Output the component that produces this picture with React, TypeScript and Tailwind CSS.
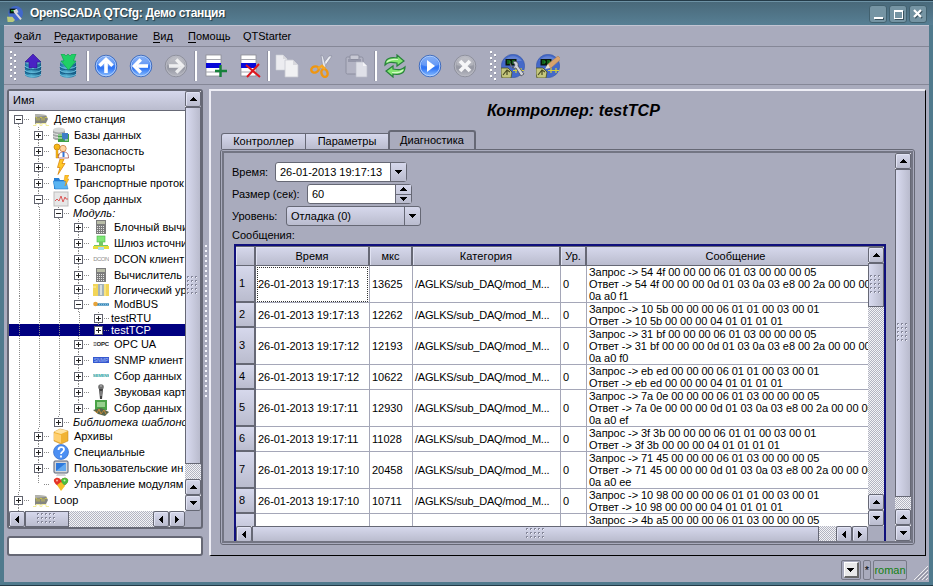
import type { ReactNode } from "react";

const frame = "border-2 border-[#666875] rounded-[3px]";
const metal = "bg-gradient-to-b from-[#d6d8ec] to-[#babcce]";
const checker =
  "bg-[conic-gradient(#f4f4f6_25%,#b2b4c2_0_50%,#f4f4f6_0_75%,#b2b4c2_0)] bg-[length:2px_2px]";

type Dir = "up" | "down" | "left" | "right";
const arrows: Record<Dir, string> = {
  up: "M3 0h1v1h1v1h1v1h1v1H0V3h1V2h1V1h1z",
  down: "M0 0h7v1H6v1H5v1H4v1H3V3H2V2H1V1H0z",
  left: "M4 0v7H3V6H2V5H1V4H0V3h1V2h1V1h1V0z",
  right: "M0 0v7h1V6h1V5h1V4h1V3H3V2H2V1H1V0z",
};

function Arrow({ dir }: { dir: Dir }) {
  const tall = dir === "left" || dir === "right";
  return (
    <svg width={tall ? 4 : 7} height={tall ? 7 : 4} shapeRendering="crispEdges" className="block shrink-0">
      <path d={arrows[dir]} />
    </svg>
  );
}

function Btn({ dir, className = "w-4 h-4" }: { dir: Dir; className?: string }) {
  return (
    <div className={`flex shrink-0 items-center justify-center rounded-[2px] border border-[#666875] shadow-[inset_1px_1px_0_#e2e4f4] ${metal} ${className}`}>
      <Arrow dir={dir} />
    </div>
  );
}

function Dots({ cols, rows, step = 4 }: { cols: number; rows: number; step?: number }) {
  const items: ReactNode[] = [];
  for (let r = 0; r < rows; r++)
    for (let c = 0; c < cols; c++)
      items.push(
        <g key={`${r}-${c}`}>
          <rect x={c * step + 1} y={r * step + 1} width="1" height="1" fill="#f6f6ff" />
          <path d={`M${c * step} ${r * step + 2}v-2h2v1h-1v1z`} fill="#85879a" />
        </g>
      );
  return (
    <svg width={cols * step} height={rows * step} shapeRendering="crispEdges" className="block">
      {items}
    </svg>
  );
}

function Grip() {
  return (
    <svg width="7" height="31" shapeRendering="crispEdges" className="block shrink-0">
      {[0, 1, 2, 3, 4].map((i) => (
        <g key={i}>
          <path d={`M0 ${i * 6}h2v2h-2zM4 ${i * 6 + 3}h2v2h-2z`} fill="#fff" />
          <path d={`M2 ${i * 6 + 1}v2h-1v-1zM6 ${i * 6 + 4}v2h-1v-1z`} fill="#8a8c9d" />
        </g>
      ))}
    </svg>
  );
}

/* ---------- toolbar icons (24 x 24) ---------- */

function Ico({ children }: { children: ReactNode }) {
  return (
    <svg width="24" height="24" viewBox="0 0 24 24" className="block shrink-0">
      {children}
    </svg>
  );
}

function Database({ down }: { down?: boolean }) {
  return (
    <Ico>
      <path d="M4 8v12c0 5 16 5 16 0V8z" fill="url(#db)" />
      <ellipse cx="12" cy="8" rx="8" ry="3" fill="#66a8c8" />
      <path d="M4 12c1 3 15 3 16 0M4 16c1 3 15 3 16 0M4 20c1 3 15 3 16 0" fill="none" stroke="#6cc0de" strokeWidth="1" />
      <path d="M4 13.500c1 3 15 3 16 0M4 17.500c1 3 15 3 16 0" fill="none" stroke="#14567e" strokeWidth=".9" />
      {down ? (
        <path d="M5 0h3l2 2 2-2 2 2 2-2h4l-2.500 7H20l-7.500 9L5 7h3z" fill="#1fd066" stroke="#0d9a48" strokeWidth=".6" />
      ) : (
        <path d="M12 0 20 8h-4v6h-3l-1-1-1 1H8V8H4z" fill="#4a22c4" stroke="#2d1287" strokeWidth=".6" />
      )}
    </Ico>
  );
}

function Round({ gray, children }: { gray?: boolean; children: ReactNode }) {
  return (
    <Ico>
      <circle cx="12" cy="12" r="10.800" fill={gray ? "url(#rg)" : "url(#rb)"} stroke={gray ? "#8a8c98" : "#3a66b8"} strokeWidth=".9" />
      <circle cx="12" cy="12" r="9.800" fill="none" stroke={gray ? "#b9bac4" : "#b9d2fa"} strokeWidth=".9" />
      <path d="M3.500 11a8.500 8 0 0 1 17 0q-8.500 3-17 0" fill="#fff" opacity=".2" />
      {children}
    </Ico>
  );
}

function TableIcon({ remove }: { remove?: boolean }) {
  return (
    <Ico>
      <rect x="3" y="1" width="15" height="21" fill="#fff" stroke="#8d8e96" strokeWidth=".8" />
      <path d="M3 5.500h15M3 18h15" stroke="#a4a5ad" />
      <rect x="3" y="9" width="15" height="5" fill="#0808d8" />
      {remove ? (
        <path d="m8 11 14 12M21 10 9 23" stroke="#e0161d" strokeWidth="2" />
      ) : (
        <path d="M17.500 11v12M12 17h12" stroke="#16813a" strokeWidth="2.400" />
      )}
    </Ico>
  );
}

function Station({ pencil }: { pencil?: boolean }) {
  return (
    <Ico>
      <circle cx="12" cy="12" r="11.700" fill="#4469c9" stroke="#3454a0" strokeWidth=".5" />
      <path d="M3 7a11 11 0 0 1 18 0" fill="#8ba4dd" opacity=".45" />
      <path d="M12 16.500h11M15 14v5M20 14v5" stroke="#d6cf3a" strokeWidth="1.200" />
      <rect x="4.500" y="5" width="11" height="6.500" fill="#08170a" />
      <path d="M6 7h3v2H6m5-2h3v2h-3" stroke="#1ca42a" fill="none" strokeWidth="1" />
      <path d="M0 14h7l4 4-1 6H1l-1-4z" fill="#c4c67c" stroke="#494e24" strokeWidth=".8" />
      <path d="m2 21 4-5 3 2M6 16v5" stroke="#484b22" fill="none" strokeWidth="1.200" />
      {pencil ? (
        <>
          <path d="m10 14 2-4L22 2l3 3-10 9z" fill="#d9a36e" stroke="#a77b53" strokeWidth=".5" />
          <path d="m9 15 3-5 2 4z" fill="#e6e2d6" />
        </>
      ) : (
        <path d="M9 9c0 4 3 6 6 5l5 8 3-2-6-8c1-3-2-6-5-4l2 3-2 3z" fill="#d0d2d8" stroke="#4a4e5c" strokeWidth=".8" />
      )}
    </Ico>
  );
}

const Sep = () => <div className="h-[30px] w-[3px] shrink-0 border-l border-[#8f91a2] bg-white" />;

function Toolbar() {
  const up = (
    <>
      <path d="M12 8v11" fill="none" stroke="#fff" strokeWidth="3.600" />
      <path d="M5.500 11.800 12 5.300l6.500 6.500" fill="none" stroke="#fff" strokeWidth="3.400" />
    </>
  );
  return (
    <div className="flex h-[38px] shrink-0 items-center border-b border-[#858797] pl-[6px] pt-px">
      <Grip />
      <div className="ml-1 flex items-center gap-[11px]">
        <Database />
        <Database down />
      </div>
      <div className="ml-[6px]"><Sep /></div>
      <div className="ml-[5px] flex items-center gap-[11px]">
        <Round>{up}</Round>
        <Round><g transform="rotate(-90 12 12)">{up}</g></Round>
        <Round gray><g transform="rotate(90 12 12)" opacity=".8">{up}</g></Round>
      </div>
      <div className="ml-[6px]"><Sep /></div>
      <div className="ml-[6px] flex items-center gap-[11px]">
        <TableIcon />
        <TableIcon remove />
      </div>
      <div className="ml-[5px]"><Sep /></div>
      <div className="ml-[5px] flex items-center gap-[11px]">
        <Ico>
          <path d="M1 1h7l4 4v11H1z" fill="#ececf0" stroke="#cfd0d6" strokeWidth=".6" />
          <path d="M8 1v4h4" fill="#d8d8dd" />
          <path d="M10 6h8l5 5v12H10z" fill="#f1f1f3" stroke="#c8c9d0" strokeWidth=".8" />
          <path d="M18 6v5h5" fill="#d8d8dd" />
        </Ico>
        <Ico>
          <path d="m9 14 9-12 3 0-9 13z" fill="#eceef3" stroke="#85889a" strokeWidth=".6" transform="translate(1 0)" />
          <path d="m13 14-2-13 2 1 3 11z" fill="#e4e6ee" stroke="#85889a" strokeWidth=".6" />
          <ellipse cx="5" cy="15.500" rx="3.800" ry="3" fill="none" stroke="#ef9610" strokeWidth="2.400" transform="rotate(-18 5 15.500)" />
          <ellipse cx="14.500" cy="19" rx="3" ry="4" fill="none" stroke="#ef9610" strokeWidth="2.400" transform="rotate(-18 14.500 19)" />
          <path d="M8 14.500 12 12l3 3" stroke="#f4a625" strokeWidth="2.600" fill="none" />
        </Ico>
        <Ico>
          <rect x="1" y="3" width="17" height="17" rx="1.500" fill="#b3b4c4" stroke="#8d8fa0" />
          <path d="M3 5h13v3H3z" fill="#9698aa" />
          <rect x="5" y="1" width="9" height="4.500" rx="1" fill="#c8c9d4" stroke="#8d8fa0" />
          <path d="M11 8h7l4 4v11H11z" fill="#dfe0e8" stroke="#babbc9" strokeWidth=".7" />
          <path d="M18 8v4h4" fill="#f3f3f7" />
        </Ico>
      </div>
      <div className="ml-[5px]"><Sep /></div>
      <div className="ml-[6px] flex items-center gap-[11px]">
        <Ico>
          <path d="M2 11c0-7 6-8 12-7V1l7 6-7 5V9C8 8 5 8 2 11z" fill="#83e670" stroke="#27813b" strokeWidth="1.200" />
          <path d="M22 13c0 7-6 8-12 7v3l-7-6 7-5v3c6 1 9 1 12-2z" fill="#83e670" stroke="#27813b" strokeWidth="1.200" />
          <path d="M4 8c3-3 7-3 11-2.500M20 16c-3 3-7 3-11 2.500" fill="none" stroke="#d3fbc6" strokeWidth="1.200" />
        </Ico>
        <Round><path d="m9 6 8 6-8 6z" fill="#fff" /></Round>
        <Round gray><path d="m7 7 10 10M17 7 7 17" stroke="#f6f6f8" strokeWidth="3.800" /></Round>
      </div>
      <div className="ml-[13px]"><Grip /></div>
      <div className="ml-1 flex items-center gap-[11px]">
        <Station />
        <Station pencil />
      </div>
    </div>
  );
}

/* ---------- tree ---------- */

const treeIcons: Record<string, ReactNode> = {
  station: (
    <>
      <path d="M2 3 13 4l2 4-2 4-11 1z" fill="#858680" />
      <path d="M2 3 13 4v1L2 6z" fill="#b4b5ae" />
      <path d="M2.500 6.500h1.500v3M6 6.500v3M7 6.500h2v3M11 6.500v3M12 6.500h2" stroke="#c9c04b" fill="none" />
      <path d="M0 14.500h3v-2h4v2h2v-2h4v2h3" stroke="#f1ec9c" fill="none" />
    </>
  ),
  db: (
    <>
      <path d="M0 3v8c0 3 12 3 12 0V3z" fill="#a5a8a8" />
      <ellipse cx="6" cy="3" rx="6" ry="2.500" fill="#d7dad8" />
      <path d="M0 6c1 2 11 2 12 0M0 9c1 2 11 2 12 0" stroke="#e8eae8" fill="none" />
      <path d="M5 7h11v8H5z" fill="#3fa045" />
      <path d="M9 6h6v5l-3 3-3-3z" fill="#3f7ec7" />
      <path d="M5 8h4M5 11h4M12 13h3" stroke="#dff0dc" />
    </>
  ),
  security: (
    <>
      <circle cx="4" cy="4" r="3" fill="#f7b81b" stroke="#bf7b05" strokeWidth=".7" />
      <path d="M3 6h2v9H3zM5 11h2v2H5z" fill="#f7b81b" stroke="#bf7b05" strokeWidth=".4" />
      <circle cx="10" cy="5.500" r="3.200" fill="#ffd3a2" stroke="#bd7333" strokeWidth=".7" />
      <path d="M5.500 15c0-5 2-6 5-6s5 1 5 6z" fill="#fff" stroke="#9d4141" strokeWidth=".7" />
      <path d="M10.500 9v5" stroke="#3676d5" strokeWidth="2" />
    </>
  ),
  bolt: <path d="M7 0h4L9 4.500h3L5 15.500l2-7H4.500z" fill="#ffc928" stroke="#d9850c" strokeWidth=".8" />,
  folder: (
    <>
      <path d="M1 3h5l1 2h7v9H1z" fill="#257fd6" />
      <path d="M0 6h13l2 8H2z" fill="#59b4f2" stroke="#2371c0" strokeWidth=".5" />
      <path d="M12 0h4l-2 4h2l-4 7 1-5h-2z" fill="#ffc326" stroke="#dd8c12" strokeWidth=".5" />
    </>
  ),
  wave: (
    <>
      <rect x="1" y="1" width="14" height="14" fill="#e7e7e7" stroke="#bdbdbd" />
      <path d="m2 10 2-2 2 2 2-5 2 6 2-5 1 2h2" stroke="#db5858" fill="none" />
    </>
  ),
  calc: (
    <>
      <rect x="3" y="1" width="10" height="14" fill="#7c7c7c" />
      <rect x="4" y="2" width="8" height="3" fill="#b9bda8" />
      <path d="M4 7.500h8M4 9.500h8M4 11.500h8M4 13.500h8" stroke="#e4e4e4" strokeDasharray="1 1" />
    </>
  ),
  gate: (
    <>
      <rect x="4" y="1" width="8" height="6" fill="#7fe677" stroke="#48b644" strokeWidth=".6" />
      <path d="M6 7h4v3h5v2H1v-2h5z" fill="#74c765" />
      <path d="M0 11h16v3H0z" fill="#e8dc3c" />
      <path d="M5 12h6v3H5z" fill="#aaddeb" />
    </>
  ),
  logic: (
    <>
      <path d="M0 2h16v12H0z" fill="#f2d557" />
      <path d="M5 2h6v12H5z" fill="#a4b3b9" />
      <path d="M7 3h2v10H7z" fill="#d7dede" />
      <path d="M12 2v12M3 5H0" stroke="#fff2ab" />
    </>
  ),
  modbus: (
    <>
      <path d="M3 8.500h13" stroke="#3486b8" strokeWidth="2.400" />
      <path d="M6 8.500h9" stroke="#a8d4ea" strokeWidth=".7" strokeDasharray="1 1" />
      <circle cx="2.500" cy="8" r="2.300" fill="#e6a33a" />
    </>
  ),
  mic: (
    <>
      <circle cx="8" cy="3" r="2.800" fill="#707070" />
      <path d="M6 5h4l-1 10H7z" fill="#414141" />
      <path d="M7 2h2M8 7v5" stroke="#bbb" />
    </>
  ),
  board: (
    <>
      <path d="M2 0h12v10H2z" fill="#4aa347" />
      <path d="M4 2h8v5H4z" fill="#97d08e" />
      <path d="m0 10 8-2 8 4-4 4-7-2z" fill="#58664a" />
      <path d="m2 11 2 2 2-4 2 5 3-4 2 4" stroke="#c2883a" fill="none" />
    </>
  ),
  box: (
    <>
      <path d="m1 4 6-3 8 2v10l-7 3-7-3z" fill="#f1b333" stroke="#bf8019" strokeWidth=".5" />
      <path d="m1 4 6-3 8 2-7 3z" fill="#ffe3a0" />
      <path d="m1 5 7 2v8l-7-3z" fill="#ffd070" />
    </>
  ),
  help: (
    <>
      <circle cx="8" cy="8" r="7.500" fill="#4c8ff3" stroke="#356cc5" strokeWidth=".7" />
      <path d="M5.500 6c0-4 5.500-3.500 5.500-.5C11 8 8 7.500 8 10M8 11.500v2" stroke="#fff" strokeWidth="1.800" fill="none" />
    </>
  ),
  monitor: (
    <>
      <rect x="1" y="1" width="14" height="12" rx="1" fill="#d5d7da" stroke="#555d70" />
      <rect x="3" y="3" width="10" height="8" fill="#2e79dc" />
      <path d="M3 11 13 3v8z" fill="#64a9ef" />
      <path d="M4 14h8l1 2H3z" fill="#d2d3d6" />
    </>
  ),
  modules: (
    <>
      <path d="M1 3.500C3 1 6 1 8 4c2-3 5-3 7-.5 1 3-3 6-7 8-4-2-8-5-7-8z" fill="#e53327" />
      <path d="M8 4c2-3 5-3 7-.5 1 3-2 5-5 6.500z" fill="#49bd3c" />
      <path d="m4 9 4-3 4 4-4 5z" fill="#f3bf27" />
      <circle cx="4" cy="4.500" r="1" fill="#ffb6a5" />
      <circle cx="11.500" cy="4.500" r="1" fill="#caf2b6" />
    </>
  ),
};

const textLogos: Record<string, ReactNode> = {
  dcon: <span className="text-[6px] tracking-[-0.5px] text-[#8b8b8b]">DCON</span>,
  opc: <span className="text-[6px] font-bold tracking-[-0.2px] text-[#222]">≡OPC</span>,
  snmp: <span className="flex h-[6px] w-4 items-center justify-center bg-[#3558cf] text-[5px] leading-none text-[#a9bdf7]">SNMP</span>,
  siemens: <span className="text-[4px] font-bold tracking-[-0.2px] text-[#28a3a3]">SIEMENS</span>,
};

type Row = { l: number; t: string; i?: string; e?: "+" | "-"; it?: boolean; sel?: boolean; h?: string };
const tree: Row[] = [
  { l: 0, t: "Демо станция", i: "station", e: "-" },
  { l: 1, t: "Базы данных", i: "db", e: "+" },
  { l: 1, t: "Безопасность", i: "security", e: "+" },
  { l: 1, t: "Транспорты", i: "bolt", e: "+" },
  { l: 1, t: "Транспортные проток", i: "folder", e: "+" },
  { l: 1, t: "Сбор данных", i: "wave", e: "-" },
  { l: 2, t: "Модуль:", e: "-", it: true, h: "h-[12px]" },
  { l: 3, t: "Блочный вычи", i: "calc", e: "+" },
  { l: 3, t: "Шлюз источни", i: "gate", e: "+" },
  { l: 3, t: "DCON клиент", i: "dcon", e: "+" },
  { l: 3, t: "Вычислитель", i: "calc", e: "+" },
  { l: 3, t: "Логический ур", i: "logic", e: "+", h: "h-[13px]" },
  { l: 3, t: "ModBUS", i: "modbus", e: "-" },
  { l: 4, t: "testRTU", e: "+", h: "h-[12px]" },
  { l: 4, t: "testTCP", e: "+", sel: true, h: "h-[12px]" },
  { l: 3, t: "OPC UA", i: "opc", e: "+" },
  { l: 3, t: "SNMP клиент", i: "snmp", e: "+" },
  { l: 3, t: "Сбор данных S", i: "siemens", e: "+" },
  { l: 3, t: "Звуковая карт", i: "mic", e: "+" },
  { l: 3, t: "Сбор данных с", i: "board", e: "+" },
  { l: 2, t: "Библиотека шаблонов", e: "+", it: true, h: "h-[12px]" },
  { l: 1, t: "Архивы", i: "box", e: "+" },
  { l: 1, t: "Специальные", i: "help", e: "+" },
  { l: 1, t: "Пользовательские ин", i: "monitor", e: "+" },
  { l: 1, t: "Управление модулям", i: "modules" },
  { l: 0, t: "Loop", i: "station", e: "+" },
  { l: 0, t: "", i: "station", e: "+" },
];

const vdots = "bg-[repeating-linear-gradient(to_bottom,#8a8a8a_0_1px,transparent_1px_2px)]";
const hdots = "bg-[repeating-linear-gradient(to_right,#8a8a8a_0_1px,transparent_1px_2px)]";

function TreeRow({ row, index }: { row: Row; index: number }) {
  const continues = (level: number) => {
    for (let i = index + 1; i < tree.length; i++) {
      if (tree[i].l === level) return true;
      if (tree[i].l < level) return false;
    }
    return false;
  };
  return (
    <div className={`flex shrink-0 items-center ${row.h ?? "h-4"} ${row.sel ? "bg-[#000080] text-white" : ""}`}>
      {Array.from({ length: row.l }, (_, k) => (
        <div key={k} className="flex h-full w-5 shrink-0 justify-center">
          {continues(k) && <div className={`h-full w-px ${vdots}`} />}
        </div>
      ))}
      <div className="flex h-full w-5 shrink-0 items-center pl-[5px]">
        <div className="flex h-full w-[9px] flex-col items-center">
          <div className={`w-px flex-1 ${index ? vdots : ""}`} />
          {row.e && (
            <svg width="9" height="9" shapeRendering="crispEdges" className="block shrink-0">
              <rect x=".5" y=".5" width="8" height="8" fill="#fff" stroke="#62646f" />
              <path d={row.e === "+" ? "M2 4.500h5M4.500 2v5" : "M2 4.500h5"} stroke="#222" />
            </svg>
          )}
          <div className={`w-px flex-1 ${continues(row.l) ? vdots : ""}`} />
        </div>
        <div className={`ml-px h-px flex-1 ${hdots}`} />
      </div>
      {row.i && (
        <div className="ml-[4px] mr-[5px] flex w-4 shrink-0 items-center justify-center overflow-hidden leading-none">
          {textLogos[row.i] ?? (
            <svg width="16" height="16" viewBox="0 0 16 16" className="block">{treeIcons[row.i]}</svg>
          )}
        </div>
      )}
      <span className={`whitespace-nowrap leading-[12px] ${row.it ? "ml-[4px] italic tracking-[0.1px]" : ""} ${row.l === 4 ? "ml-[2px]" : ""}`}>{row.t}</span>
    </div>
  );
}

function LeftPane() {
  return (
    <div className="flex w-[196px] shrink-0 flex-col">
      <div className={`flex h-[440px] flex-col ${frame}`}>
        <div className="flex h-[420px]">
          <div className="flex w-[176px] flex-col overflow-hidden bg-white">
            <div className={`flex h-5 shrink-0 items-center border-b border-[#666875] pl-1 ${metal}`}>Имя</div>
            {tree.map((r, i) => <TreeRow key={i} row={r} index={i} />)}
          </div>
          <div className={`flex w-4 flex-col ${checker}`}>
            <Btn dir="up" />
            <div className="flex h-[357px] items-center justify-center border border-[#666875] bg-gradient-to-r from-[#d9dbf0] to-[#b9bbcd]"><Dots cols={3} rows={5} /></div>
            <div className="flex-1" />
            <Btn dir="up" />
            <Btn dir="down" />
          </div>
        </div>
        <div className="flex h-4">
          <div className={`flex w-[176px] ${checker}`}>
            <Btn dir="left" />
            <div className={`flex w-[44px] items-center justify-center border border-[#666875] ${metal}`}><Dots cols={5} rows={3} /></div>
            <div className="flex-1" />
            <Btn dir="left" />
            <Btn dir="right" />
          </div>
        </div>
      </div>
      <div className="mt-[7px] h-5 rounded-[3px] border-2 border-[#666875] bg-white" />
    </div>
  );
}

/* ---------- message table ---------- */

type Msg = { time: string; us: string; lines: string[] };
const msgs: Msg[] = [
  { time: "26-01-2013 19:17:13", us: "13625", lines: ["Запрос -> 54 4f 00 00 00 06 01 03 00 00 00 05", "Ответ -> 54 4f 00 00 00 0d 01 03 0a 03 e8 00 2a 00 00 00", "0a a0 f1"] },
  { time: "26-01-2013 19:17:13", us: "12262", lines: ["Запрос -> 10 5b 00 00 00 06 01 01 00 03 00 01", "Ответ -> 10 5b 00 00 00 04 01 01 01 01"] },
  { time: "26-01-2013 19:17:12", us: "12193", lines: ["Запрос -> 31 bf 00 00 00 06 01 03 00 00 00 05", "Ответ -> 31 bf 00 00 00 0d 01 03 0a 03 e8 00 2a 00 00 00", "0a a0 f0"] },
  { time: "26-01-2013 19:17:12", us: "10622", lines: ["Запрос -> eb ed 00 00 00 06 01 01 00 03 00 01", "Ответ -> eb ed 00 00 00 04 01 01 01 01"] },
  { time: "26-01-2013 19:17:11", us: "12930", lines: ["Запрос -> 7a 0e 00 00 00 06 01 03 00 00 00 05", "Ответ -> 7a 0e 00 00 00 0d 01 03 0a 03 e8 00 2a 00 00 00", "0a a0 ef"] },
  { time: "26-01-2013 19:17:11", us: "11028", lines: ["Запрос -> 3f 3b 00 00 00 06 01 01 00 03 00 01", "Ответ -> 3f 3b 00 00 00 04 01 01 01 01"] },
  { time: "26-01-2013 19:17:10", us: "20458", lines: ["Запрос -> 71 45 00 00 00 06 01 03 00 00 00 05", "Ответ -> 71 45 00 00 00 0d 01 03 0a 03 e8 00 2a 00 00 00", "0a a0 ee"] },
  { time: "26-01-2013 19:17:10", us: "10711", lines: ["Запрос -> 10 98 00 00 00 06 01 01 00 03 00 01", "Ответ -> 10 98 00 00 00 04 01 01 01 01"] },
];

const cols = "grid grid-cols-[20px_114px_43px_148px_26px_281px]";
const hcell = `flex items-center justify-center border-b border-r-2 border-b-[#666875] border-r-[#666875] shadow-[inset_1px_1px_0_#e0e2f2] ${metal}`;
const cell = "flex items-center overflow-hidden whitespace-nowrap border-b border-r border-[#a5a7b8] pl-[2px]";
const vhead = `flex items-center border-b-2 border-r-2 border-[#666875] pl-[3px] ${metal}`;

function MessageTable() {
  return (
    <div className="ml-[10px] mt-[3px] flex h-[298px] w-[652px] flex-col border-2 border-b-0 border-[#10107c]">
      <div className="flex h-[280px] border-t border-[#666875]">
        <div className="w-[632px] overflow-hidden bg-white">
          <div className={`h-[19px] ${cols}`}>
            <div className={hcell} />
            <div className={hcell}>Время</div>
            <div className={hcell}>мкс</div>
            <div className={`${hcell} tracking-[0.1px]`}>Категория</div>
            <div className={hcell}>Ур.</div>
            <div className={`flex items-center justify-center border-b border-[#666875] pl-4 ${metal}`}>Сообщение</div>
          </div>
          {msgs.map((m, i) => (
            <div key={i} className={`${cols} ${m.lines.length === 3 ? "h-[37px]" : "h-[25px]"}`}>
              <div className={vhead}>{i + 1}</div>
              <div className={`${cell} tracking-[-0.05px]`}>
                <div className={i === 0 ? "-ml-px flex h-[35px] w-[111px] items-center border border-dotted border-[#333]" : ""}>{m.time}</div>
              </div>
              <div className={cell}>{m.us}</div>
              <div className={`${cell} tracking-[-0.22px]`}>/AGLKS/sub_DAQ/mod_M...</div>
              <div className={cell}>0</div>
              <div className="overflow-hidden whitespace-pre border-b border-[#a5a7b8] pl-[2px] leading-[12px] tracking-[-0.06px]">{m.lines.join("\n")}</div>
            </div>
          ))}
          <div className={`h-[25px] ${cols}`}>
            <div className={vhead} />
            <div className={cell} />
            <div className={cell} />
            <div className={cell} />
            <div className={cell} />
            <div className="whitespace-pre pl-[2px] leading-[12px] tracking-[-0.06px]">Запрос -&gt; 4b a5 00 00 00 06 01 03 00 00 00 05</div>
          </div>
        </div>
        <div className={`flex w-4 flex-col ${checker}`}>
          <Btn dir="up" />
          <div className="flex h-[44px] items-center justify-center border border-[#666875] bg-gradient-to-r from-[#d9dbf0] to-[#b9bbcd]"><Dots cols={3} rows={5} /></div>
          <div className="flex-1" />
          <Btn dir="up" />
          <Btn dir="down" />
        </div>
      </div>
      <div className="flex h-4">
        <div className={`flex w-[632px] ${checker}`}>
          <Btn dir="left" />
          <div className={`flex w-[567px] items-center justify-center border border-[#666875] ${metal}`}><Dots cols={5} rows={3} /></div>
          <div className="flex-1" />
          <Btn dir="left" />
          <Btn dir="right" />
        </div>
      </div>
    </div>
  );
}

function RightPane() {
  return (
    <div className="flex h-[467px] w-[717px] shrink-0 flex-col border-b border-l-2 border-r border-t-2 border-b-black border-l-[#eeeef6] border-r-black border-t-[#eeeef6]">
      <div className="flex h-[40px] items-center justify-center pb-[2px] pl-[11px] text-[16px] font-bold italic tracking-[0.1px]">Контроллер: testTCP</div>
      <div className="flex h-[18px] items-end pl-[10px]">
        <div className={`flex h-[16px] w-[85px] items-center justify-center rounded-tl-[3px] border border-b-0 border-[#666875] ${metal}`}>Контроллер</div>
        <div className={`flex h-[16px] w-[82px] items-center justify-center border-t border-[#666875] ${metal}`}>Параметры</div>
        <div className="flex h-[19px] w-[88px] items-center justify-center rounded-t-[3px] border-2 border-b-0 border-[#666875]">Диагностика</div>
      </div>
      <div className="ml-[9px] h-[396px] w-[695px] rounded-[3px] border border-[#666875] p-px">
        <div className="flex h-full border-2 border-[#737583]">
          <div className="w-[671px] overflow-hidden">
            <div className="ml-2 mt-[9px] flex h-5 items-center">
              <span className="w-[43px]">Время:</span>
              <div className={`flex h-5 w-[132px] items-center bg-white ${frame} !border`}>
                <span className="w-[114px] pl-1">26-01-2013 19:17:13</span>
                <div className={`flex h-full flex-1 items-center justify-center border-l border-[#666875] ${metal}`}><Arrow dir="down" /></div>
              </div>
            </div>
            <div className="ml-2 mt-[2px] flex h-5 items-center">
              <span className="w-[75px]">Размер (сек):</span>
              <div className={`flex h-5 w-[105px] items-center bg-white ${frame} !border`}>
                <span className="w-[87px] pl-1">60</span>
                <div className={`flex h-full flex-1 flex-col border-l border-[#666875] ${metal}`}>
                  <div className="flex flex-1 items-center justify-center border-b border-[#666875]"><Arrow dir="up" /></div>
                  <div className="flex flex-1 items-center justify-center"><Arrow dir="down" /></div>
                </div>
              </div>
            </div>
            <div className="ml-2 mt-[2px] flex h-5 items-center">
              <span className="w-[54px]">Уровень:</span>
              <div className={`flex h-5 w-[135px] items-center ${frame} !border ${metal}`}>
                <span className="w-[117px] pl-1">Отладка (0)</span>
                <div className="flex h-full flex-1 items-center justify-center border-l border-[#666875]"><Arrow dir="down" /></div>
              </div>
            </div>
            <div className="ml-2 mt-[3px] h-3 leading-[12px]">Сообщения:</div>
            <MessageTable />
          </div>
          <div className={`flex w-4 flex-col ${checker}`}>
            <Btn dir="up" />
            <div className="flex h-[328px] items-center justify-center border border-[#666875] bg-gradient-to-r from-[#d9dbf0] to-[#b9bbcd]"><Dots cols={3} rows={5} /></div>
            <div className="flex-1" />
            <Btn dir="up" />
            <Btn dir="down" />
          </div>
        </div>
      </div>
    </div>
  );
}

const winBtn = "flex h-[18px] w-[18px] items-center justify-center rounded-[3px] border border-[#42616f] bg-[#7594a3]";
const menus: [string, string, string][] = [
  ["Ф", "айл", "w-[40px]"],
  ["Р", "едактирование", "w-[99px]"],
  ["В", "ид", "w-[35px]"],
  ["П", "омощь", "w-[55px]"],
];

export default function App() {
  return (
    <div className="h-[586px] w-[933px] overflow-hidden bg-[#a9abbd] font-['Liberation_Sans',Arial,sans-serif] text-[11px] leading-[13px] text-black">
      <svg width="0" height="0" className="block">
        <defs>
          <linearGradient id="rb" x2="0" y2="1"><stop stopColor="#6fa1f1" /><stop offset=".6" stopColor="#2f75f5" /><stop offset="1" stopColor="#8fc2ff" /></linearGradient>
          <linearGradient id="rg" x2="0" y2="1"><stop stopColor="#b3b4bd" /><stop offset=".6" stopColor="#9698a3" /><stop offset="1" stopColor="#b9bac3" /></linearGradient>
          <linearGradient id="db"><stop stopColor="#1b6f9e" /><stop offset=".4" stopColor="#4aa9cb" /><stop offset="1" stopColor="#155b85" /></linearGradient>
        </defs>
      </svg>
      <div className="flex h-full flex-col border-b border-t border-[#243b48]">
        <div className="flex h-6 shrink-0 items-center border-t border-[#6d92a5] bg-gradient-to-b from-[#49697a] to-[#577f94] pl-[7px]">
          <svg width="16" height="16" viewBox="0 0 24 24" className="block">
            <circle cx="13" cy="11" r="11" fill="#4268ca" />
            <path d="M4 4h11v7H4z" fill="#041808" />
            <path d="M6 7h7" stroke="#23a43a" strokeWidth="2" />
            <path d="M0 16h8l4 5-3 3H1z" fill="#b9ca7c" />
            <path d="m11 8 10 12M10 8l4-2 2 4" stroke="#d9dade" strokeWidth="3" fill="none" />
          </svg>
          <span className="ml-[7px] text-[12px] font-bold tracking-[-0.28px] text-white [text-shadow:1px_1px_1px_#1f333d]">OpenSCADA QTCfg: Демо станция</span>
          <div className="ml-auto mr-[6px] flex gap-[2px] pt-px">
            <div className={winBtn}><div className="mt-2 h-[2px] w-[9px] bg-white shadow-[1px_1px_0_#3b535f]" /></div>
            <div className={winBtn}><div className="h-[9px] w-[9px] border border-t-2 border-white shadow-[1px_1px_0_#3b535f]" /></div>
            <div className={winBtn}>
              <svg width="10" height="10"><path d="m2 2 7 7M9 2 2 9" stroke="#3b535f" strokeWidth="2" /><path d="m1 1 7 7M8 1 1 8" stroke="#fff" strokeWidth="2.200" /></svg>
            </div>
          </div>
        </div>
        <div className="flex min-h-0 flex-1 flex-col border-x-4 border-b-[3px] border-[#507a8d]">
          <div className="flex h-[22px] shrink-0 items-center border-b border-t border-b-[#858797] border-t-[#c3c5d3] pl-[10px]">
            {menus.map(([a, b, w]) => (
              <span key={b} className={w}><span className="border-b border-black">{a}</span>{b}</span>
            ))}
            <span>QTStarter</span>
          </div>
          <Toolbar />
          <div className="flex h-[471px] shrink-0 pl-[3px] pt-1">
            <LeftPane />
            <div className="flex w-[6px] shrink-0 flex-col items-center pt-[156px]">
              <div className="h-[154px] w-[3px] bg-[radial-gradient(circle_at_1px_1px,#f5f5fb_1px,transparent_1.3px)] bg-[length:3px_5px]" />
            </div>
            <RightPane />
          </div>
          <div className="flex min-h-0 flex-1 items-end justify-end pb-[2px]">
            <div className="flex h-5 w-5 items-center justify-center rounded-[2px] border border-[#777987]">
              <div className="flex h-4 w-[15px] items-center justify-center border border-b-2 border-r-2 border-[#686868] border-l-white border-t-white bg-[#e9e9e9]"><Arrow dir="down" /></div>
            </div>
            <div className="ml-[2px] flex h-5 w-2 items-center justify-center rounded-[2px] border border-[#777987]">*</div>
            <div className="ml-[2px] flex h-5 w-[34px] items-center justify-center rounded-[2px] border border-[#777987] text-[#128012]">roman</div>
            <svg width="14" height="14" className="ml-[7px] mr-px block"><path d="m0 14 14-14M4 14 14 4M8 14l6-6M12 14l2-2" stroke="#eee" /><path d="m2 14 12-12M6 14l8-8M10 14l4-4" stroke="#81838f" strokeWidth=".7" /></svg>
          </div>
        </div>
      </div>
    </div>
  );
}
